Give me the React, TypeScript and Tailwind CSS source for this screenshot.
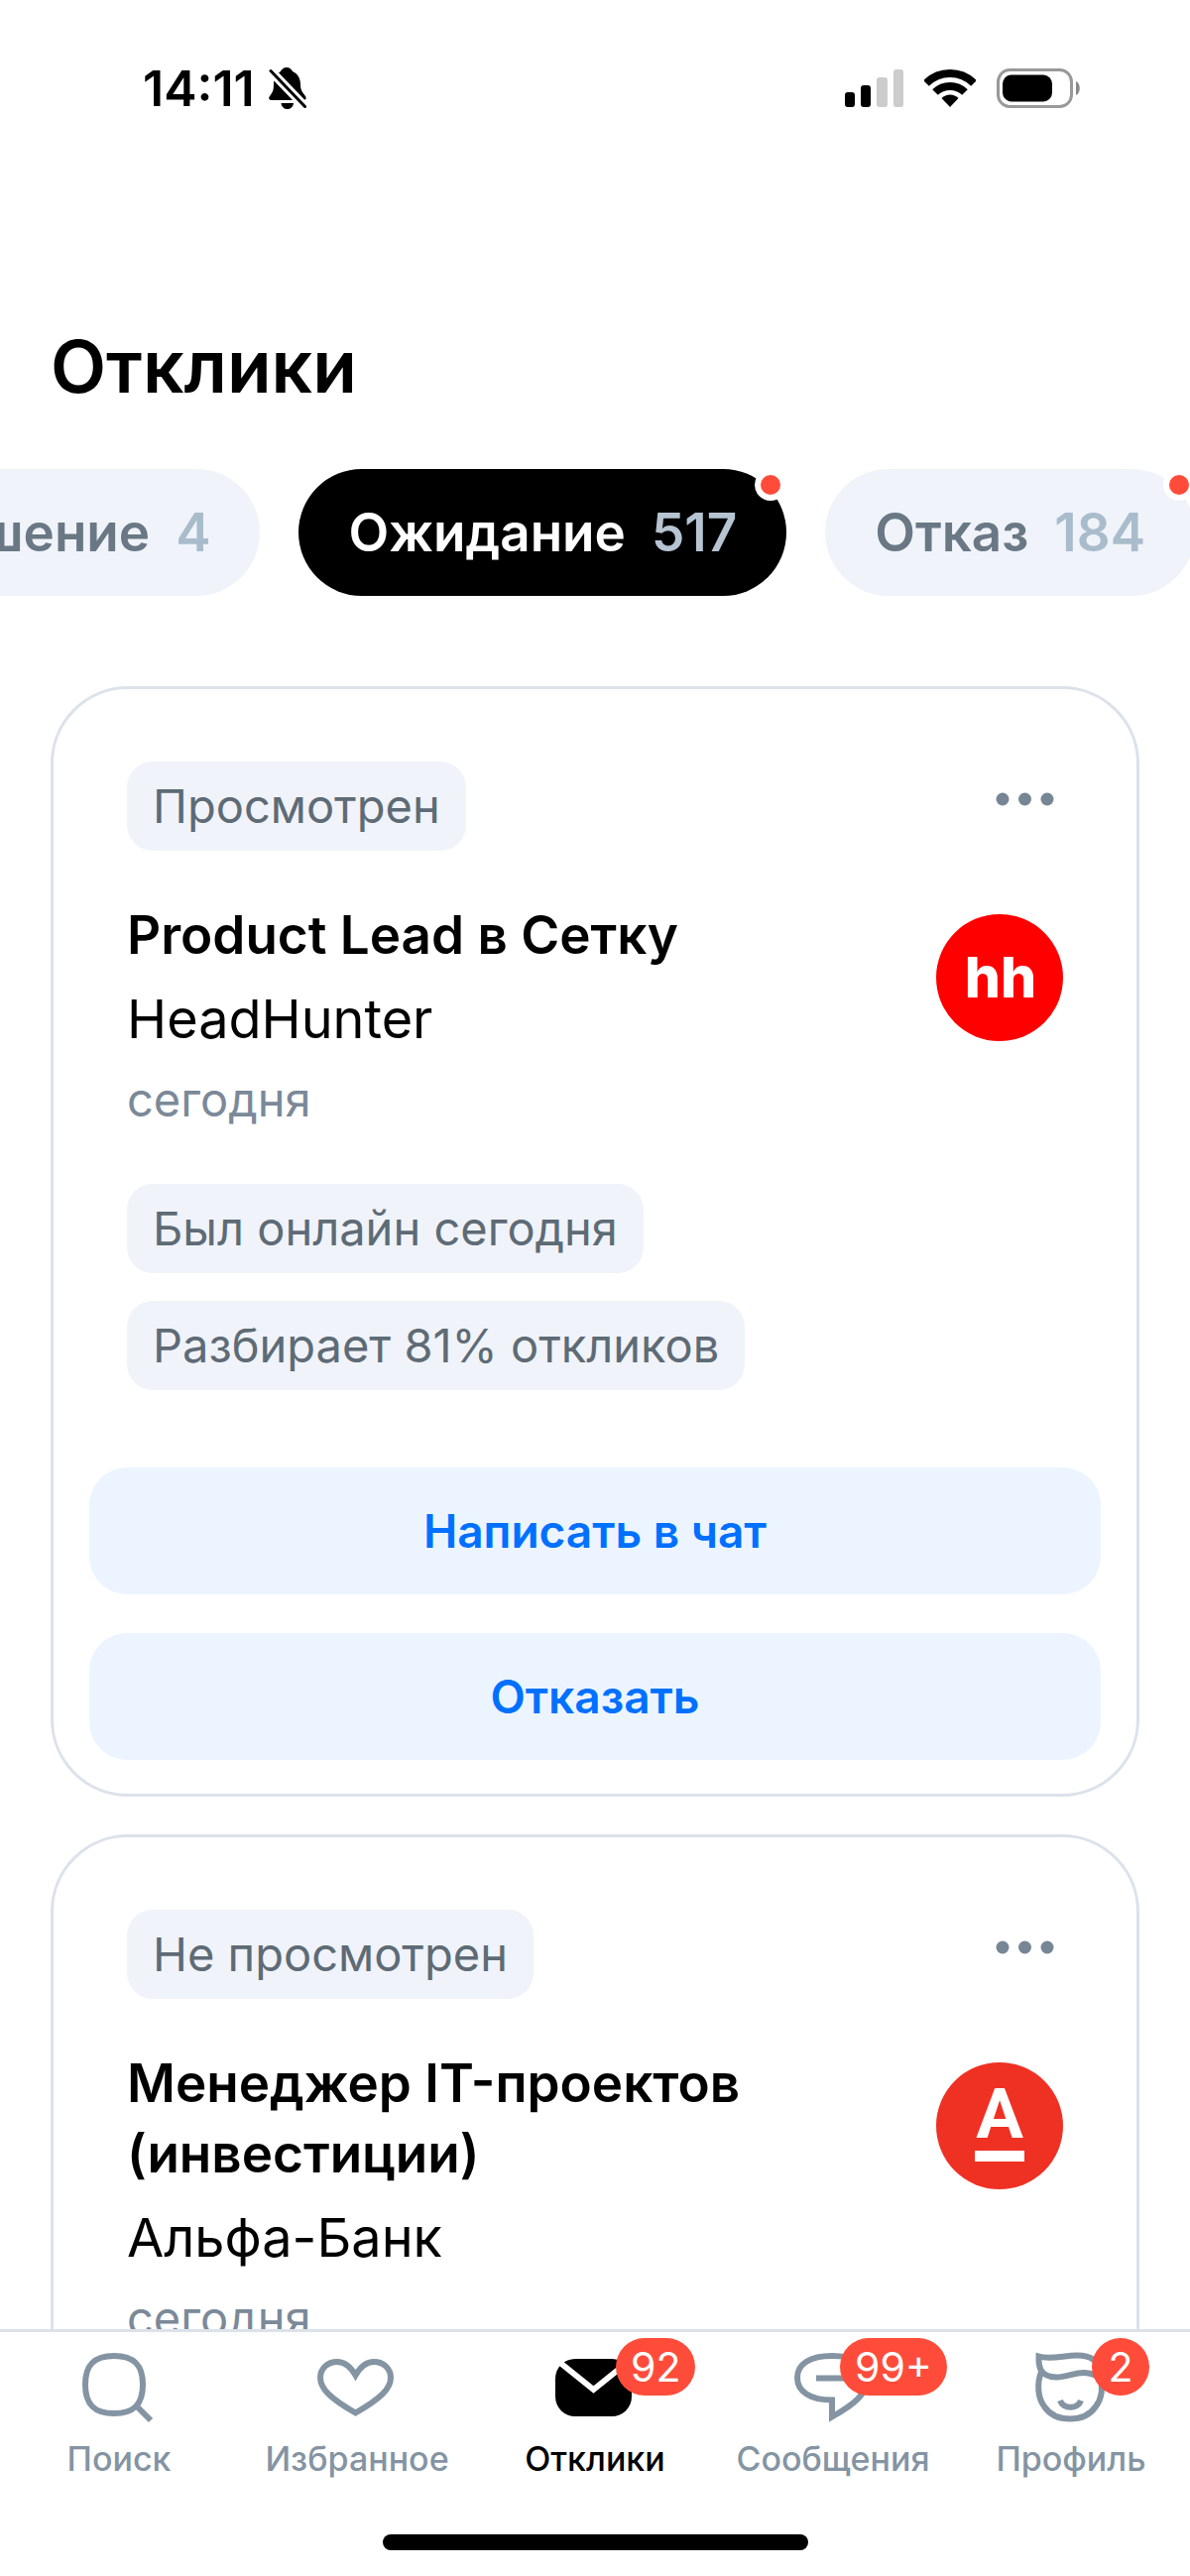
import { useState } from 'react'
import type { ReactNode } from 'react'
import clsx from 'clsx'

interface Filter {
  id: string
  label: string
  count: number
  hasNew: boolean
}

interface Application {
  id: string
  status: string
  title: string
  company: string
  date: string
  tags: string[]
  logo: ReactNode
}

interface NavItem {
  id: string
  label: string
  icon: ReactNode
  badge?: string
  badgeClass?: string
}

const filters: Filter[] = [
  { id: 'invite', label: 'Приглашение', count: 4, hasNew: false },
  { id: 'waiting', label: 'Ожидание', count: 517, hasNew: true },
  { id: 'rejected', label: 'Отказ', count: 184, hasNew: true },
]

const HeadHunterLogo = () => (
  <svg viewBox="0 0 128 128" className="w-32 h-32 shrink-0" aria-hidden="true">
    <circle cx="64" cy="64" r="64" fill="#ff0000" />
    <text x="65" y="84" textAnchor="middle" fontFamily="Inter, sans-serif" fontWeight="800" fontSize="57" fill="#fff">
      hh
    </text>
  </svg>
)

const AlfaLogo = () => (
  <svg viewBox="0 0 128 128" className="w-32 h-32 shrink-0" aria-hidden="true">
    <circle cx="64" cy="64" r="64" fill="#ef3124" />
    <text x="64" y="76" textAnchor="middle" fontFamily="Roboto, sans-serif" fontWeight="700" fontSize="71" fill="#fff">
      A
    </text>
    <rect x="39" y="89" width="50" height="11" fill="#fff" />
  </svg>
)

const applications: Application[] = [
  {
    id: '1',
    status: 'Просмотрен',
    title: 'Product Lead в Сетку',
    company: 'HeadHunter',
    date: 'сегодня',
    tags: ['Был онлайн сегодня', 'Разбирает 81% откликов'],
    logo: <HeadHunterLogo />,
  },
  {
    id: '2',
    status: 'Не просмотрен',
    title: 'Менеджер IT-проектов (инвестиции)',
    company: 'Альфа-Банк',
    date: 'сегодня',
    tags: [],
    logo: <AlfaLogo />,
  },
]

function NavIcon({ children }: { children: ReactNode }) {
  return (
    <svg viewBox="-1 0 80 78" className="w-20 h-[78px]" fill="none" stroke="currentColor" strokeWidth="6" aria-hidden="true">
      {children}
    </svg>
  )
}

const navItems: NavItem[] = [
  {
    id: 'search',
    label: 'Поиск',
    icon: (
      <NavIcon>
        <path d="M34 7C54 7 63 16 63 36S54 65 34 65 5 56 5 36 14 7 34 7Z" />
        <path d="M56 57L71 72" />
      </NavIcon>
    ),
  },
  {
    id: 'favorites',
    label: 'Избранное',
    icon: (
      <NavIcon>
        <path d="M37.5 26.5C32 17 26 13 19 13C9 13 2 20 2 29C2 40 12 50 37.5 64.5C63 50 73 40 73 29C73 20 66 13 56 13C49 13 43 17 37.5 26.5Z" />
      </NavIcon>
    ),
  },
  {
    id: 'applications',
    label: 'Отклики',
    badge: '92',
    icon: (
      <NavIcon>
        <rect x="-1" y="10" width="77" height="58" rx="20" fill="currentColor" stroke="none" />
        <path d="M-1 10L37.5 41L76 10" stroke="#fff" />
      </NavIcon>
    ),
  },
  {
    id: 'messages',
    label: 'Сообщения',
    badge: '99+',
    badgeClass: 'left-[calc(50%+7px)]',
    icon: (
      <NavIcon>
        <path d="M38 51.5C16 51.5 3 43 3 29C3 15 16 7 38 7C61 7 74 15 74 29C74 45 60 56 38 68.5Z" />
        <path d="M22 29.5H54" />
      </NavIcon>
    ),
  },
  {
    id: 'profile',
    label: 'Профиль',
    badge: '2',
    icon: (
      <NavIcon>
        <path d="M6.5 7.5C18 11 32 6.5 45 6.5C58 6.5 68 10 70 31C66 27 60 24.5 53 24C42 23.5 36 28.5 24 28.5C9 28 6 20 6.5 7.5Z" />
        <path d="M9 23C4 36 6 50 12 58C18 67 27 70.5 38 70.5C49 70.5 58 67 64 58C70 50 71 42 69 28" />
        <path d="M28 52C31 61 46 61 49 52" />
      </NavIcon>
    ),
  },
]

function StatusBar() {
  return (
    <div className="flex items-center justify-between h-[178px] pl-36 pr-[110px] shrink-0">
      <div className="flex items-center gap-3.5">
        <span className="text-[50px] leading-[60px] font-semibold">14:11</span>
        <svg viewBox="0 0 38 42" className="w-[38px] h-[42px]" aria-label="Без звука">
          <path d="M18 0C21 0 23 2 24 4C29 6 32 11 32 17C32 23 34 25 37 29C38 31 38 33 35 33H3C0 33 -0.5 31 1 29C4 25 5 23 5 17C5 11 8 6 12 4C13 2 15 0 18 0Z" />
          <path d="M12.5 36H25C24 44 13.5 44 12.5 36Z" />
          <path d="M1 2.5L37 40" stroke="#fff" strokeWidth="9" />
          <path d="M2 3.5L36.5 39.5" stroke="#000" strokeWidth="3" strokeLinecap="round" />
        </svg>
      </div>
      <div className="flex items-center">
        <svg viewBox="0 0 60 40" className="w-[60px] h-10 mr-5" aria-label="Сигнал">
          <rect x="0" y="24" width="10" height="15" rx="3" />
          <rect x="16" y="17" width="10" height="22" rx="3" />
          <rect x="32" y="9" width="11" height="30" rx="3" fill="#ccc" />
          <rect x="49" y="1" width="10" height="38" rx="3" fill="#ccc" />
        </svg>
        <svg viewBox="0 0 52 40" className="w-[52px] h-10 mr-[21px]" aria-label="Wi-Fi">
          <g fill="none" stroke="#000" strokeWidth="8">
            <path d="M2 15A34 34 0 0 1 50 15" />
            <path d="M11 24A21.5 21.5 0 0 1 41 24" />
          </g>
          <path d="M26 39L17.5 30A12 12 0 0 1 34.5 30Z" />
        </svg>
        <svg viewBox="0 0 85 40" className="w-[85px] h-10" aria-label="Батарея">
          <rect x="1.5" y="1.5" width="74" height="37" rx="12" fill="none" stroke="#999" strokeWidth="3" />
          <rect x="6" y="6.5" width="50" height="27" rx="9" />
          <path d="M80 13C85 15 85 25 80 27Z" fill="#888" />
        </svg>
      </div>
    </div>
  )
}

interface FilterChipProps {
  filter: Filter
  active: boolean
  onSelect: () => void
}

function FilterChip({ filter, active, onSelect }: FilterChipProps) {
  return (
    <button
      onClick={onSelect}
      aria-pressed={active}
      className={clsx(
        'relative flex items-center gap-[26px] h-32 px-[50px] rounded-full shrink-0 text-[53px] leading-[64px] font-semibold',
        active ? 'bg-black text-white' : 'bg-[#f0f3f9] text-[#6a7885]'
      )}
    >
      {filter.label}
      <span className={active ? 'text-[#b6c3d1]' : 'text-[#a9bccb]'}>{filter.count}</span>
      {filter.hasNew && (
        <span className="absolute top-0 right-0 w-8 h-8 rounded-full border-[6px] border-white bg-[#ff4c3a]" />
      )}
    </button>
  )
}

function Tag({ children }: { children: ReactNode }) {
  return (
    <span className="flex items-center h-[90px] px-[26px] rounded-[26px] bg-[#f0f3f9] text-[#5e6b76] text-[47px] leading-[60px]">
      {children}
    </span>
  )
}

function ActionButton({ children }: { children: ReactNode }) {
  return (
    <button className="h-32 rounded-[38px] bg-[#ecf5ff] text-[#0070ff] text-[46px] leading-[60px] font-semibold">
      {children}
    </button>
  )
}

function ApplicationCard({ application }: { application: Application }) {
  return (
    <article className="shrink-0 border-[3px] border-[#dce2ea] rounded-[78px] pt-[73px] pb-[34px]">
      <div className="px-[74px]">
        <div className="flex items-start justify-between">
          <Tag>{application.status}</Tag>
          <button aria-label="Ещё">
            <svg viewBox="0 0 78 76" className="w-[78px] h-[76px]" fill="#768694">
              <circle cx="17" cy="38" r="6.5" />
              <circle cx="39.5" cy="38" r="6.5" />
              <circle cx="62" cy="38" r="6.5" />
            </svg>
          </button>
        </div>

        <div className="flex items-start justify-between gap-16 mt-[50px]">
          <div>
            <h2 className="text-[53px] leading-[71px] font-semibold">{application.title}</h2>
            <p className="mt-[13px] text-[54px] leading-[71px]">{application.company}</p>
            <p className="mt-4 text-[47px] leading-[60px] text-[#7b8998]">{application.date}</p>
          </div>
          <div className="pt-3.5">{application.logo}</div>
        </div>

        <div className="flex flex-col items-start gap-7 mt-[55px]">
          {application.tags.map(tag => (
            <Tag key={tag}>{tag}</Tag>
          ))}
        </div>
      </div>

      <div className="flex flex-col gap-[39px] mt-[78px] px-9">
        <ActionButton>Написать в чат</ActionButton>
        <ActionButton>Отказать</ActionButton>
      </div>
    </article>
  )
}

export default function App() {
  const [activeFilter, setActiveFilter] = useState('waiting')
  const [activeTab, setActiveTab] = useState('applications')

  return (
    <div className="flex flex-col h-screen overflow-hidden bg-white text-black font-['Inter',sans-serif]">
      <StatusBar />

      <h1 className="mt-[148px] px-[51px] text-[73px] leading-[88px] font-semibold shrink-0">Отклики</h1>

      {/* Filters, scrolled to the end */}
      <div className="mt-[59px] overflow-hidden shrink-0">
        <div className="flex justify-end gap-[39px] -mr-[5px]">
          {filters.map(filter => (
            <FilterChip
              key={filter.id}
              filter={filter}
              active={filter.id === activeFilter}
              onSelect={() => setActiveFilter(filter.id)}
            />
          ))}
        </div>
      </div>

      <main className="flex flex-col flex-1 min-h-0 gap-[38px] mt-[91px] px-[51px] overflow-hidden">
        {applications.map(application => (
          <ApplicationCard key={application.id} application={application} />
        ))}
      </main>

      {/* Bottom navigation */}
      <nav className="border-t-[3px] border-[#dce2ea] bg-white shrink-0">
        <div className="grid grid-cols-5 pt-[17px]">
          {navItems.map(item => (
            <a
              key={item.id}
              href={`#${item.id}`}
              onClick={() => setActiveTab(item.id)}
              className={clsx(
                'relative flex flex-col items-center gap-3',
                item.id === activeTab ? 'text-black' : 'text-[#8494a3]'
              )}
            >
              {item.icon}
              <span className="text-[34px] leading-[42px] font-medium">{item.label}</span>
              {item.badge && (
                <span
                  className={clsx(
                    'absolute -top-[11px] flex items-center justify-center h-[58px] min-w-[58px] px-[15px] rounded-full bg-[#ff4c3a] text-white text-[41px] leading-[50px]',
                    item.badgeClass ?? 'left-[calc(50%+21px)]'
                  )}
                >
                  {item.badge}
                </span>
              )}
            </a>
          ))}
        </div>
        <div className="w-[429px] h-4 mx-auto mt-[55px] mb-[26px] rounded-full bg-black" />
      </nav>
    </div>
  )
}
